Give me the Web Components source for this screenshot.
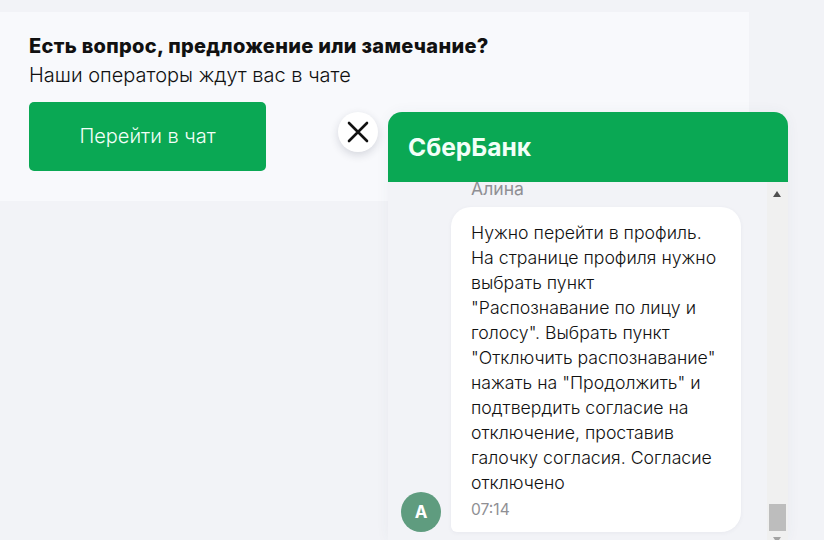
<!DOCTYPE html>
<html lang="ru">
<head>
<meta charset="UTF-8">
<title>Чат</title>
<style>
  html, body { margin: 0; height: 540px; overflow: hidden; background: #f2f3f7; }
  body { font-family: Inter, "Noto Sans", sans-serif; position: relative; padding-top: 12px; box-sizing: border-box; }
</style>
</head>
<body>
  <promo-card>
    <span slot="title">Есть вопрос, предложение или замечание?</span>
    <span slot="text">Наши операторы ждут вас в чате</span>
    <span slot="action">Перейти в чат</span>
  </promo-card>

  <close-button></close-button>

  <chat-window title-text="СберБанк">
    <chat-message name="Алина" initial="А" time="07:14">Нужно перейти в профиль. На странице профиля нужно выбрать пункт "Распознавание по лицу и голосу". Выбрать пункт "Отключить распознавание" нажать на "Продолжить" и подтвердить согласие на отключение, проставив галочку согласия. Согласие отключено</chat-message>
  </chat-window>

  <script>
    class PromoCard extends HTMLElement {
      constructor() {
        super();
        this.attachShadow({ mode: 'open' }).innerHTML = `
          <style>
            :host { display: block; width: 749px; height: 189px; box-sizing: border-box; padding: 22px 29px 0; background: #f8f9fc; color: #111; }
            .title { font-size: 20px; line-height: 25px; font-weight: 800; letter-spacing: .3px; white-space: nowrap; }
            .text { font-size: 20px; line-height: 25px; margin-top: 4px; font-weight: 300; white-space: nowrap; }
            .action { display: flex; align-items: center; justify-content: center; width: 237px; height: 69px; margin-top: 14px; border-radius: 5px; background: #0aa854; color: #f2fff8; font-size: 20px; font-weight: 300; padding-bottom: 1px; box-sizing: border-box; }
          </style>
          <div class="title"><slot name="title"></slot></div>
          <div class="text"><slot name="text"></slot></div>
          <div class="action"><slot name="action"></slot></div>`;
      }
    }

    class CloseButton extends HTMLElement {
      constructor() {
        super();
        this.attachShadow({ mode: 'open' }).innerHTML = `
          <style>
            :host { position: absolute; left: 338px; top: 112px; width: 40px; height: 40px; border-radius: 50%; background: #fff; box-shadow: 0 3px 8px rgba(30, 40, 60, .16); display: flex; align-items: center; justify-content: center; }
            svg { display: block; }
          </style>
          <svg width="24" height="24" viewBox="0 0 24 24" fill="none" stroke="#111" stroke-width="2.6" stroke-linecap="round">
            <path d="M3 3 L21 21 M21 3 L3 21"/>
          </svg>`;
      }
    }

    class ChatWindow extends HTMLElement {
      constructor() {
        super();
        this.attachShadow({ mode: 'open' }).innerHTML = `
          <style>
            :host { position: absolute; left: 388px; top: 112px; width: 400px; height: 428px; display: flex; flex-direction: column; background: #f2f3f7; box-shadow: 0 0 14px rgba(60, 70, 100, .05); border-radius: 14px 14px 0 0; }
            header { flex: none; height: 70px; box-sizing: border-box; padding: 0 0 1px 20px; display: flex; align-items: center; background: #0aa854; color: #f2fff8; font-size: 24.6px; font-weight: 700; border-radius: 14px 14px 0 0; }
            .body { flex: 1; min-height: 0; display: flex; }
            .list { flex: 1; min-width: 0; overflow: hidden; }
            .bar { flex: none; width: 21px; background: #f0f0f0; position: relative; }
            .up { position: absolute; left: 6px; top: 9px; width: 0; height: 0; border: 4.5px solid transparent; border-top: 0; border-bottom: 6px solid #505050; }
            .thumb { position: absolute; left: 2px; top: 322px; width: 17px; height: 27px; background: #bdbdbd; }
            .down { position: absolute; left: 6px; top: 355px; width: 0; height: 0; border: 4.5px solid transparent; border-bottom: 0; border-top: 6px solid #a3a3a3; }
          </style>
          <header></header>
          <div class="body">
            <div class="list"><slot></slot></div>
            <div class="bar"><div class="up"></div><div class="thumb"></div><div class="down"></div></div>
          </div>`;
        this.shadowRoot.querySelector('header').textContent = this.getAttribute('title-text');
      }
    }

    class ChatMessage extends HTMLElement {
      constructor() {
        super();
        this.attachShadow({ mode: 'open' }).innerHTML = `
          <style>
            :host { display: block; padding-left: 13px; }
            .name { margin-left: 70px; height: 25px; font-size: 17.6px; line-height: 14px; color: #8f8f94; }
            .row { display: flex; align-items: flex-end; gap: 10px; }
            .avatar { flex: none; width: 40px; height: 40px; border-radius: 50%; background: #5f9c7f; color: #fff; font-size: 17px; font-weight: 700; display: flex; align-items: center; justify-content: center; }
            .bubble { width: 290px; box-sizing: border-box; padding: 13px 20px 10px; background: #fff; border-radius: 20px 20px 20px 6px; box-shadow: 0 1px 4px rgba(60, 70, 100, .06); color: #111; font-size: 17.7px; line-height: 25px; font-weight: 300; }
            .time { margin-top: 3px; font-size: 15.6px; line-height: 24px; font-weight: 400; color: #8f8f94; }
          </style>
          <div class="name"></div>
          <div class="row">
            <div class="avatar"></div>
            <div class="bubble"><slot></slot><div class="time"></div></div>
          </div>`;
        const root = this.shadowRoot;
        root.querySelector('.name').textContent = this.getAttribute('name');
        root.querySelector('.avatar').textContent = this.getAttribute('initial');
        root.querySelector('.time').textContent = this.getAttribute('time');
      }
    }

    customElements.define('promo-card', PromoCard);
    customElements.define('close-button', CloseButton);
    customElements.define('chat-window', ChatWindow);
    customElements.define('chat-message', ChatMessage);
  </script>
</body>
</html>
